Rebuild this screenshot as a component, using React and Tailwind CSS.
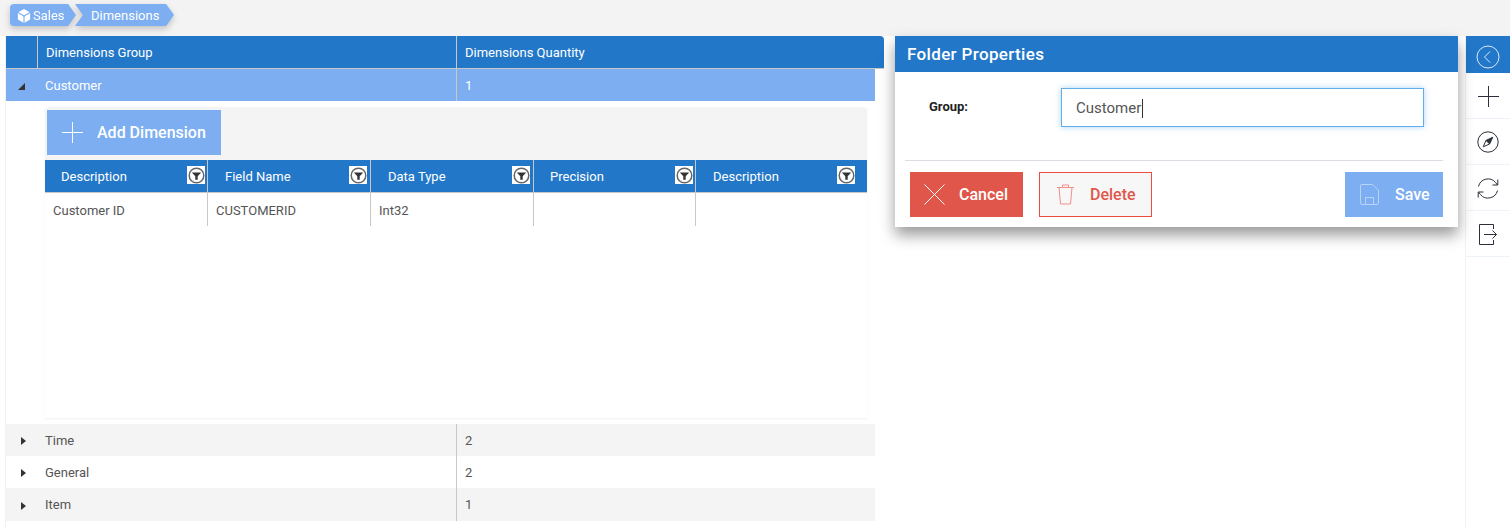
import { Box } from 'lucide-react';

const groups = [
  { name: 'Time', qty: 2, shade: true, height: 'h-[32px]' },
  { name: 'General', qty: 2, shade: false, height: 'h-[32px]' },
  { name: 'Item', qty: 1, shade: true, height: 'h-[33px]' },
];

const columns = [
  { title: 'Description', width: 'w-[163px]', pad: 'pl-[16px]', filter: 'right-[2px]' },
  { title: 'Field Name', width: 'w-[163px]', pad: 'pl-[17px]', filter: 'right-[3px]' },
  { title: 'Data Type', width: 'w-[163px]', pad: 'pl-[17px]', filter: 'right-[3px]' },
  { title: 'Precision', width: 'w-[162px]', pad: 'pl-[16px]', filter: 'right-[2px]' },
  { title: 'Description', width: 'w-[171px]', pad: 'pl-[17px]', filter: 'right-[12px]' },
];

const cells = ['Customer ID', 'CUSTOMERID', 'Int32', '', ''];

function FilterIcon({ place }) {
  return (
    <span className={`absolute top-[6px] flex h-[18px] w-[18px] items-center justify-center bg-white ${place}`}>
      <svg width="17" height="17" viewBox="0 0 17 17">
        <circle cx="8.5" cy="8.5" r="7.3" fill="none" stroke="#666" strokeWidth="1.5" />
        <path d="M3.8 5.6h9.4L9.7 9.2v3.6H7.3V9.2z" fill="#333" />
      </svg>
    </span>
  );
}

function PlusIcon({ color }) {
  return (
    <svg width="21" height="21" viewBox="0 0 21 21" stroke={color} strokeWidth="1" fill="none">
      <path d="M10.5 0v21M0 10.5h21" />
    </svg>
  );
}

function CrossIcon() {
  return (
    <svg width="21" height="21" viewBox="0 0 21 21" stroke="#fff" strokeWidth="1" fill="none">
      <path d="M.5.5l20 20M20.5.5l-20 20" />
    </svg>
  );
}

function BinIcon() {
  return (
    <svg width="17" height="21" viewBox="0 0 17 21" stroke="#ef8f88" strokeWidth="1" fill="none">
      <path d="M0 3.5h17M5.5 3.5V1h6v2.5M2 3.5l1.5 16.5h10L15 3.5" />
    </svg>
  );
}

function SaveIcon() {
  return (
    <svg width="19" height="21" viewBox="0 0 19 21" fill="none" stroke="#b9d3f6" strokeWidth="1">
      <path d="M2 .5h10.5l6 5.5v13a1.5 1.5 0 0 1-1.5 1.5H2A1.5 1.5 0 0 1 .5 19V2A1.5 1.5 0 0 1 2 .5z" />
      <path d="M5.5 20v-6.5h8V20" />
    </svg>
  );
}

function BackIcon() {
  return (
    <svg width="24" height="24" viewBox="0 0 24 24" fill="none" stroke="#dbe9f9" strokeWidth="1">
      <circle cx="12" cy="12" r="11" />
      <path d="M14 6.5 8.5 12l5.5 5.5" />
    </svg>
  );
}

function CompassIcon() {
  return (
    <svg width="22" height="22" viewBox="0 0 22 22" fill="none" stroke="#2c2f3c" strokeWidth="1">
      <circle cx="11" cy="11" r="10.2" />
      <path d="M15.8 6.2 12.6 13 9 9.4z" fill="#2c2f3c" />
      <path d="M9 9.4 6.2 15.8 12.6 13" />
    </svg>
  );
}

function SyncIcon() {
  return (
    <svg width="22" height="23" viewBox="0 0 22 23" fill="none" stroke="#2c2f3c" strokeWidth="1">
      <path d="M1.5 9.5A9.8 9.8 0 0 1 18.6 5.5L20.5 8" />
      <path d="M20.8 2.5V8h-5.3" />
      <path d="M20.5 13.5A9.8 9.8 0 0 1 3.4 17.5L1.5 15" />
      <path d="M1.2 20.5V15h5.3" />
    </svg>
  );
}

function ExitIcon() {
  return (
    <svg width="18" height="21" viewBox="0 0 18 21" fill="none" stroke="#2c2f3c" strokeWidth="1">
      <path d="M14.5 5V.5H.5v20h14V16" />
      <path d="M5 10.5h12.5M13.5 6.5l4 4-4 4" />
    </svg>
  );
}

function GroupRow({ name, qty, shade, height }) {
  return (
    <div className={`flex w-[869px] items-center text-[13px] text-[#555] ${height} ${shade ? 'bg-[#f4f4f4]' : 'bg-white'}`}>
      <div className="flex w-[39px] pl-[15px] pt-[2px]">
        <span className="h-0 w-0 border-y-[4px] border-l-[5px] border-y-transparent border-l-[#333]" />
      </div>
      <div className="w-[411px] pt-[1px]">{name}</div>
      <div className="flex h-full items-center border-l border-[#c8c8c8] pl-[8px] pt-[1px]">{qty}</div>
    </div>
  );
}

function SideButton({ children, nudge }) {
  return <div className={`flex h-[46px] items-center justify-center border-b border-[#eef2f9] ${nudge}`}>{children}</div>;
}

export default function App() {
  return (
    <div className="relative h-[528px] w-[1510px] overflow-hidden bg-white font-['Roboto',sans-serif]">
      <div className="flex h-[36px] items-start bg-[#f3f3f3] pl-[10px] pt-[4px]">
        <div className="flex text-[13px] text-white drop-shadow-[0_3px_3px_rgba(0,0,0,0.2)]">
          <div className="flex h-[22px] w-[66px] items-center rounded-l-[4px] bg-[#7caef1] pl-[5px] pt-[2px] [clip-path:polygon(0_0,88%_0,100%_50%,88%_100%,0_100%)]">
            <Box size={18} color="#fff" fill="#fff" stroke="#7caef1" strokeWidth={1.5} />
            Sales
          </div>
          <div className="ml-[-1px] flex h-[22px] w-[99px] items-center bg-[#7caef1] pl-[16px] pt-[2px] [clip-path:polygon(0_0,92%_0,100%_50%,92%_100%,0_100%,8%_50%)]">
            Dimensions
          </div>
        </div>
      </div>

      <div className="flex">
        <div className="ml-[5px] w-[879px] border-l border-[#f2f2f2]">
          <div className="flex h-[33px] rounded-tr-[4px] border-b border-[#c8c8c8] bg-[#2277c9] text-[13px] text-white">
            <div className="w-[32px] border-r border-[#c8c8c8]" />
            <div className="flex w-[419px] items-center border-r border-[#c8c8c8] pl-[8px] pt-[1px]">Dimensions Group</div>
            <div className="flex items-center pl-[8px] pt-[1px]">Dimensions Quantity</div>
          </div>

          <div className="flex h-[32px] w-[869px] items-center bg-[#7caef1] text-[13px] text-white">
            <div className="flex w-[39px] pl-[12px] pt-[3px]">
              <span className="h-0 w-0 border-b-[7px] border-l-[7px] border-b-[#333] border-l-transparent" />
            </div>
            <div className="w-[411px] pt-[1px]">Customer</div>
            <div className="flex h-full items-center border-l border-[#c8c8c8] pl-[8px] pt-[1px]">1</div>
          </div>

          <div className="h-[323px] pl-[39px] pt-[6px]">
            <div className="h-[311px] w-[822px] shadow-[0_1px_2px_rgba(0,0,0,0.06)]">
              <div className="h-[53px] rounded-t-[4px] bg-[#f4f4f4] pl-[2px] pt-[3px]">
                <div className="flex h-[45px] w-[174px] items-center bg-[#7caef1] pl-[15px] text-[16px] font-medium text-white">
                  <PlusIcon color="#fff" />
                  <span className="ml-[14px]">Add Dimension</span>
                </div>
              </div>
              <div className="flex h-[33px] border-b border-[#c8c8c8] bg-[#2277c9] text-[13px] text-white">
                {columns.map((col, i) => (
                  <div key={i} className={`relative flex items-center pt-[1px] ${col.pad} ${col.width} ${i < 4 ? 'border-r border-[#c8c8c8]' : ''}`}>
                    {col.title}
                    <FilterIcon place={col.filter} />
                  </div>
                ))}
              </div>
              <div className="flex h-[33px] text-[13px] text-[#555]">
                {cells.map((cell, i) => (
                  <div key={i} className={`flex items-center pl-[8px] pt-[3px] ${columns[i].width} ${i < 4 ? 'border-r border-[#c8c8c8]' : ''}`}>
                    {cell}
                  </div>
                ))}
              </div>
            </div>
          </div>

          {groups.map((g) => (
            <GroupRow key={g.name} {...g} />
          ))}
        </div>

        <div className="relative ml-[11px] h-[191px] w-[563px] bg-white shadow-[0_8px_14px_rgba(0,0,0,0.4)]">
          <div className="flex h-[36px] items-center bg-[#2277c9] pl-[12px] pt-[1px] text-[17px] font-medium tracking-[0.35px] text-white">Folder Properties</div>
          <div className="mx-[10px] mr-[15px] flex h-[89px] border-b border-[#dcdce4]">
            <div className="w-[156px] pl-[24px] pt-[27px] text-[13px] font-bold leading-[15px] text-[#222]">Group:</div>
            <div className="mt-[16px] flex h-[39px] w-[363px] items-center border border-[#62aeea] pl-[14px] pt-[2px] text-[15px] text-[#555] shadow-[0_0_6px_rgba(98,174,234,0.5)]">
              Customer
              <span className="ml-[1px] h-[19px] w-px bg-[#333]" />
            </div>
          </div>
          <div className="mt-[11px] flex px-[15px]">
            <div className="flex h-[45px] w-[113px] items-center bg-[#e0564b] pl-[14px] text-[16px] font-medium text-white">
              <CrossIcon />
              <span className="ml-[14px]">Cancel</span>
            </div>
            <div className="ml-[16px] flex h-[45px] w-[113px] items-center border border-[#ee4b42] bg-[#f7f7f7] pl-[17px] text-[16px] font-medium text-[#e0564b]">
              <BinIcon />
              <span className="ml-[16px]">Delete</span>
            </div>
            <div className="ml-auto flex h-[45px] w-[98px] items-center bg-[#7caef1] pl-[15px] text-[16px] font-medium text-white">
              <SaveIcon />
              <span className="ml-[16px]">Save</span>
            </div>
          </div>
        </div>

        <div className="ml-[7px] h-[492px] w-[45px] border-l border-[#eef2f9]">
          <div className="flex h-[37px] items-center justify-center bg-[#2277c9] pt-[4px]">
            <BackIcon />
          </div>
          <SideButton nudge="pt-[1px]"><PlusIcon color="#2c2f3c" /></SideButton>
          <SideButton nudge=""><CompassIcon /></SideButton>
          <SideButton nudge="pt-[1px]"><SyncIcon /></SideButton>
          <SideButton nudge="pt-[1px]"><ExitIcon /></SideButton>
        </div>
      </div>
    </div>
  );
}
